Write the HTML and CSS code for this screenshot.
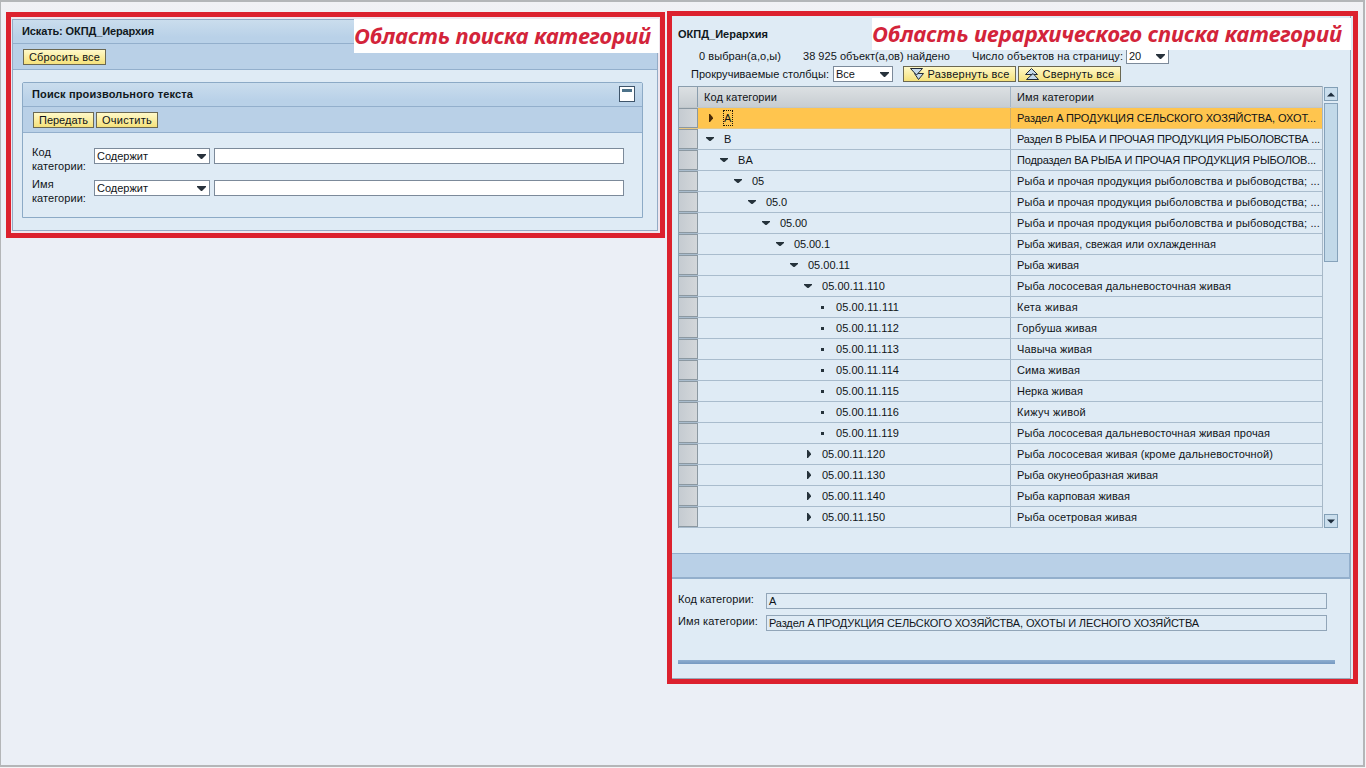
FILE: index.html
```
<!DOCTYPE html>
<html lang="ru">
<head>
<meta charset="utf-8">
<title>ОКПД_Иерархия</title>
<link rel="stylesheet" href="styles.css">
</head>
<body>
<main class="page">
  <section class="frame frame-search">
    <div class="panel">
      <h2 class="panel-head"><span class="t" style="width:132px">Искать: ОКПД_Иерархия</span></h2>
      <div class="panel-bar"><button class="btn" style="width:83px"><span class="t" style="width:71px">Сбросить все</span></button></div>
      <div class="group">
        <h3 class="group-head"><span class="t" style="width:161px">Поиск произвольного текста</span><i class="collapse"></i></h3>
        <div class="group-bar">
          <button class="btn" style="width:61px"><span class="t" style="width:49px">Передать</span></button>
          <button class="btn" style="width:62px"><span class="t" style="width:50px">Очистить</span></button>
        </div>
        <div class="criteria">
          <div class="criterion"><label><span class="t" style="width:19px">Код</span><span class="t" style="width:54px">категории:</span></label><div class="select" style="width:116px"><span class="t" style="width:51px">Содержит</span><svg width="9" height="5" viewBox="0 0 9 5"><path d="M0 0h9v1L5 5H4L0 1z"/></svg></div><div class="input"></div></div>
          <div class="criterion"><label><span class="t" style="width:22px">Имя</span><span class="t" style="width:54px">категории:</span></label><div class="select" style="width:116px"><span class="t" style="width:51px">Содержит</span><svg width="9" height="5" viewBox="0 0 9 5"><path d="M0 0h9v1L5 5H4L0 1z"/></svg></div><div class="input"></div></div>
        </div>
      </div>
    </div>
    <div class="caption caption-search"><span class="t" style="width:297px">Область поиска категорий</span></div>
  </section>

  <section class="frame frame-list">
    <div class="list-panel">
      <h2 class="list-title"><span class="t" style="width:90px">ОКПД_Иерархия</span></h2>
      <div class="stats">
        <span class="t" style="width:82px">0 выбран(а,о,ы)</span>
        <span class="t found" style="width:147px">38 925 объект(а,ов) найдено</span>
        <span class="t per" style="width:151px">Число объектов на страницу:</span>
        <div class="select" style="width:43px"><span class="t" style="width:12px">20</span><svg width="9" height="5" viewBox="0 0 9 5"><path d="M0 0h9v1L5 5H4L0 1z"/></svg></div>
      </div>
      <div class="tools">
        <span class="t" style="width:138px">Прокручиваемые столбцы:</span>
        <div class="select" style="width:60px"><span class="t" style="width:19px">Все</span><svg width="9" height="5" viewBox="0 0 9 5"><path d="M0 0h9v1L5 5H4L0 1z"/></svg></div>
        <button class="btn expand" style="width:113px"><svg class="icon" width="14" height="12" viewBox="0 0 14 12"><path d="M4.500 5.500h9L8.500 11.500z"/><path d="M.5.5h12L6.500 7z"/></svg><span class="t" style="width:82px">Развернуть все</span></button>
        <button class="btn" style="width:103px"><svg class="icon" width="14" height="12" viewBox="0 0 14 12"><path d="M.5 6.500h12L6.500.5z"/><path d="M1.500 11.500h12L8 5.500z"/></svg><span class="t" style="width:72px">Свернуть все</span></button>
      </div>
      <div class="table-wrap">
        <div class="table" id="table">
          <div class="row head"><i class="sel"></i><div class="code"><span class="t" style="width:73px">Код категории</span></div><div class="name"><span class="t" style="width:77px">Имя категории</span></div></div>
        </div>
        <div class="scroll"><i class="step"><svg width="8" height="5" viewBox="0 0 8 5"><path d="M0 4.500h8L4 .5z"/></svg></i><i class="thumb"></i><i class="step down"><svg width="8" height="5" viewBox="0 0 8 5"><path d="M0 .5h8L4 4.500z"/></svg></i></div>
      </div>
      <div class="band"></div>
      <div class="details">
        <div class="detail"><label><span class="t" style="width:76px">Код категории:</span></label><div class="value"><span class="t" style="width:8px">A</span></div></div>
        <div class="detail"><label><span class="t" style="width:80px">Имя категории:</span></label><div class="value"><span class="t" style="width:430px">Раздел A ПРОДУКЦИЯ СЕЛЬСКОГО ХОЗЯЙСТВА, ОХОТЫ И ЛЕСНОГО ХОЗЯЙСТВА</span></div></div>
      </div>
      <div class="rule"></div>
    </div>
    <div class="caption caption-list"><span class="t" style="width:470px">Область иерархического списка категорий</span></div>
  </section>
</main>
<script src="app.js"></script>
</body>
</html>
```
FILE: styles.css
```
* { box-sizing: border-box; }
body { margin: 0; width: 1366px; height: 768px; overflow: hidden; font: 11px/14px "Liberation Sans", Arial, sans-serif; color: #101418; background: #f4f4f6; }
h2, h3 { margin: 0; font-size: 11px; font-weight: bold; color: #101820; }
.t { display: block; white-space: nowrap; flex: none; }
.page { width: 1365px; height: 767px; border: 2px solid #b4b6b8; border-left-width: 1px; background: linear-gradient(#f1f1f4, #ebeff6 60px); display: flex; align-items: flex-start; padding: 9px 0 0 5px; gap: 2px; }
.frame { position: relative; border: 5px solid #dc212e; flex: none; }
.frame-search { width: 659px; height: 226px; margin-top: 1px; padding: 2px 2px 2px 1px; background: #f0e6ee; }
.frame-list { width: 691px; height: 673px; background: #dfebf5; }
.panel { width: 646px; height: 212px; border: 1px solid #93abc5; background: #dfebf5; }
.panel-head, .group-head { height: 24px; display: flex; align-items: center; border-bottom: 1px solid #93afcc; background: linear-gradient(#cadded, #b9d1e8 75%); }
.panel-head { padding: 0 0 2px 9px; }
.panel-bar { height: 26px; padding: 5px 0 0 10px; background: #b9d0e7; border-bottom: 1px solid #93afcc; }
.group { margin: 12px 0 0 9px; width: 621px; height: 136px; border: 1px solid #8caac6; border-radius: 2px 2px 0 0; }
.group-head { justify-content: space-between; padding: 0 7px 2px 9px; }
.group-bar { height: 26px; display: flex; gap: 2px; padding: 5px 0 0 10px; background: #b9d0e7; border-bottom: 1px solid #93afcc; }
.collapse { width: 16px; height: 16px; border: 1px solid #3f556b; background: linear-gradient(#4d7289, #4d7289) 50% 2px / 10px 3px no-repeat #fff; }
.btn { height: 16px; margin: 0; padding: 0; border: 1px solid #6b6852; background: linear-gradient(#fff9c9, #f5e17b); color: #101418; font: inherit; line-height: 14px; display: flex; align-items: center; justify-content: center; gap: 4px; flex: none; }
.icon { fill: #c5d9ea; stroke: #222a35; }
.criteria { padding: 13px 0 0 9px; display: flex; flex-direction: column; gap: 4px; }
.criterion { display: flex; align-items: flex-start; height: 28px; }
.criterion label { width: 62px; margin-top: -1px; }
.criterion .select, .criterion .input { margin-top: 2px; }
.criterion .input { margin-left: 4px; width: 410px; height: 16px; background: #fff; border: 1px solid #7c8a9a; }
.select { height: 16px; display: flex; align-items: center; justify-content: space-between; border: 1px solid #7c8a9a; background: #fff; padding: 0 3px 0 2px; flex: none; }
.select svg { fill: #28323c; }
.caption { position: absolute; background: #fff; color: #d3243a; font: italic bold 22px/32px "Noto Sans", sans-serif; }
.caption-search { left: 343px; top: 2px; width: 305px; height: 34px; }
.caption-list { left: 200px; top: 2px; width: 479px; height: 32px; line-height: 31px; }
.list-panel { width: 679px; height: 663px; border-right: 1px solid #98aaba; border-bottom: 1px solid #98aaba; padding-top: 11px; }
.list-title { padding-left: 6px; height: 21px; }
.stats { display: flex; align-items: center; height: 16px; padding-left: 27px; }
.found { margin-left: 22px; }
.per { margin: 0 3px 0 22px; }
.tools { margin-top: 2px; display: flex; align-items: center; height: 16px; padding-left: 19px; }
.tools .select { margin-left: 4px; }
.tools .expand { margin: 0 2px 0 10px; }
.table-wrap { display: flex; gap: 1px; margin: 4px 0 0 6px; }
.table { width: 645px; border-left: 1px solid #8ca0b0; border-right: 1px solid #a7b8c7; }
.row { height: 21px; display: grid; grid-template-columns: 19px 313px 311px; border-bottom: 1px solid #a9bccd; }
.head { height: 22px; border-top: 1px solid #8a9dad; border-bottom-color: #bfc6ca; background: linear-gradient(#dce0e3, #c7cdd1); }
.sel { border: 1px solid #8b98a1; border-left: 0; background: linear-gradient(90deg, #c5cbd1, #d3d7da); margin-top: 0; }
.head .sel { border: 0; border-right: 1px solid #8a9dad; background: none; }
.code { border-right: 1px solid #a3b5c6; display: flex; align-items: center; }
.head .code { padding-left: 6px; }
.name { display: flex; align-items: center; padding-left: 6px; overflow: hidden; }
.marker { width: 12px; height: 12px; margin-right: 8px; fill: #25323b; flex: none; }
.selected { background: #ffc54e; border-bottom-color: #e9c983; }
.selected .code { border-right-color: #d3b067; }
.selected .marker { fill: #4a2b08; }
.selected .code .t { outline: 1px dotted #20180a; }
.scroll { width: 14px; height: 442px; padding-top: 1px; display: flex; flex-direction: column; }
.step { height: 14px; border: 1px solid #829fb6; background: #cadeed; display: flex; align-items: center; justify-content: center; }
.step svg { fill: #1d2c3c; }
.thumb { height: 159px; margin-top: 2px; border: 1px solid #86a2ba; background: #c2d9e9; }
.down { margin-top: auto; }
.band { margin-top: 25px; height: 26px; width: 678px; border: 1px solid #93afcc; border-left: 0; border-bottom-width: 2px; background: #b9d0e7; }
.details { padding: 14px 0 0 6px; display: flex; flex-direction: column; gap: 6px; }
.detail { display: flex; height: 16px; }
.detail label { width: 88px; margin-top: -1px; }
.value { width: 561px; height: 16px; border: 1px solid #91a5b8; padding: 0 0 0 2px; }
.rule { margin: 29px 0 0 6px; width: 657px; height: 4px; background: linear-gradient(#8eaed0, #7598c0); }
```
FILE: app.js
```
const rows = [
  [0, 'r', 'A', 'Раздел A ПРОДУКЦИЯ СЕЛЬСКОГО ХОЗЯЙСТВА, ОХОТ...', 299, 8],
  [0, 'd', 'B', 'Раздел B РЫБА И ПРОЧАЯ ПРОДУКЦИЯ РЫБОЛОВСТВА ...', 303, 7],
  [1, 'd', 'BA', 'Подраздел BA РЫБА И ПРОЧАЯ ПРОДУКЦИЯ РЫБОЛОВ...', 299, 15],
  [2, 'd', '05', 'Рыба и прочая продукция рыболовства и рыбоводства; ...', 303, 12],
  [3, 'd', '05.0', 'Рыба и прочая продукция рыболовства и рыбоводства; ...', 303, 21],
  [4, 'd', '05.00', 'Рыба и прочая продукция рыболовства и рыбоводства; ...', 303, 27],
  [5, 'd', '05.00.1', 'Рыба живая, свежая или охлажденная', 199, 36],
  [6, 'd', '05.00.11', 'Рыба живая', 62, 42],
  [7, 'd', '05.00.11.110', 'Рыба лососевая дальневосточная живая', 214, 63],
  [8, 'p', '05.00.11.111', 'Кета живая', 61, 63],
  [8, 'p', '05.00.11.112', 'Горбуша живая', 80, 63],
  [8, 'p', '05.00.11.113', 'Чавыча живая', 75, 63],
  [8, 'p', '05.00.11.114', 'Сима живая', 63, 63],
  [8, 'p', '05.00.11.115', 'Нерка живая', 66, 63],
  [8, 'p', '05.00.11.116', 'Кижуч живой', 69, 63],
  [8, 'p', '05.00.11.119', 'Рыба лососевая дальневосточная живая прочая', 253, 63],
  [7, 'r', '05.00.11.120', 'Рыба лососевая живая (кроме дальневосточной)', 256, 63],
  [7, 'r', '05.00.11.130', 'Рыба окунеобразная живая', 141, 63],
  [7, 'r', '05.00.11.140', 'Рыба карповая живая', 113, 63],
  [7, 'r', '05.00.11.150', 'Рыба осетровая живая', 120, 63]
];
const marks = { r: 'M5 2h1l3 3.500v1L6 10H5z', d: 'M2 4h8v1L6.500 8h-1L2 5z', p: 'M5 5h3v3H5z' };
document.getElementById('table').insertAdjacentHTML('beforeend', rows.map(([level, mark, code, name, nameWidth, codeWidth], i) =>
  `<div class="row${i ? '' : ' selected'}"><i class="sel"></i><div class="code" style="padding-left:${6 + level * 14}px"><svg class="marker" viewBox="0 0 12 12"><path d="${marks[mark]}"/></svg><span class="t" style="width:${codeWidth}px">${code}</span></div><div class="name"><span class="t" style="width:${nameWidth}px">${name}</span></div></div>`).join(''));

// Spread the letters of each label over its set width.
document.querySelectorAll('.t').forEach(el => {
  const range = document.createRange();
  range.selectNodeContents(el);
  const gap = el.clientWidth - range.getBoundingClientRect().width;
  el.style.letterSpacing = gap / el.textContent.length + 'px';
});
```
